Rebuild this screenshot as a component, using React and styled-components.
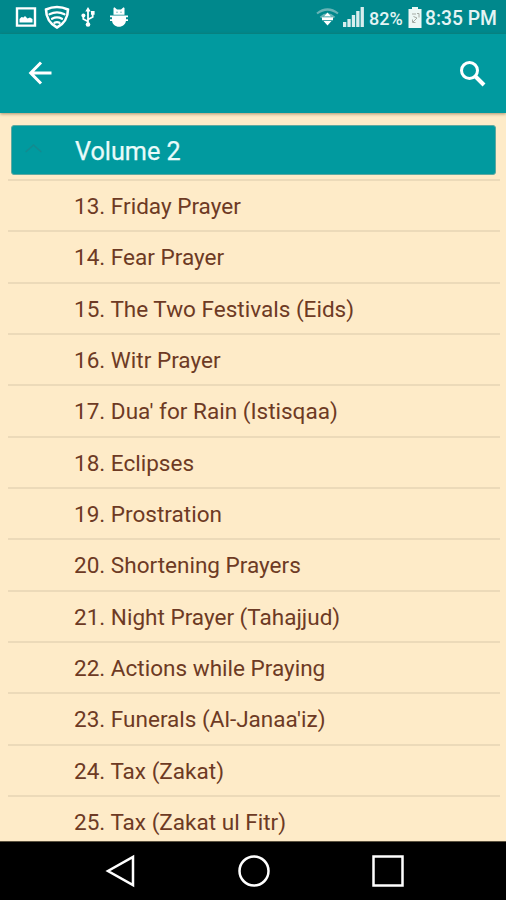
import React from "react";
import styled, { createGlobalStyle } from "styled-components";

const Global = createGlobalStyle`
  * { box-sizing: border-box; }
  body { margin: 0; background: #feebc8; font-family: Roboto, sans-serif; }
`;
const Screen = styled.main`
  width: 506px;
  height: 900px;
  overflow: hidden;
  display: flex;
  flex-direction: column;
  background: #feebc8;
`;
const StatusBar = styled.header`
  height: 34px;
  flex: none;
  display: flex;
  justify-content: space-between;
  align-items: center;
  background: #00888c;
  padding: 0 10px 0 15px;
`;
const StatusGroup = styled.div`
  display: flex;
  align-items: center;
  height: 34px;
`;
const Icon = styled.svg`
  display: block;
  flex: none;
  margin-left: ${(p) => p.$gap || 0}px;
`;
const StatusText = styled.span`
  color: #e4f4f4;
  font-size: ${(p) => p.$size}px;
  font-weight: 500;
  line-height: 34px;
  padding-top: 3px;
  width: ${(p) => p.$width}px;
  margin-left: ${(p) => p.$gap}px;
  white-space: nowrap;
`;
const Toolbar = styled.nav`
  height: 79px;
  flex: none;
  display: flex;
  justify-content: space-between;
  align-items: center;
  padding: 0 20px 1px 27px;
  background: #019a9f;
  box-shadow: 0 1px 3px rgba(90, 60, 20, 0.5);
`;
const List = styled.section`
  flex: 1;
  min-height: 0;
  overflow: hidden;
  padding: 12px 6px 0 8px;
`;
const VolumeHeader = styled.div`
  height: 50px;
  margin: 0 4px 4px 3px;
  display: flex;
  align-items: center;
  background: #019a9f;
  border: 1px solid #5fa9a0;
  border-radius: 3px;
  color: #e9fbfa;
  font-size: 25.2px;
`;
const VolumeTitle = styled.span`
  margin-left: 33px;
  padding-top: 2px;
  -webkit-text-stroke: 0.25px currentColor;
`;
const Rows = styled.ul`
  list-style: none;
  margin: 0;
  padding: 0;
`;
const Row = styled.li`
  height: 51.33px;
  border-top: 2px solid #ecdab9;
  padding-left: 66px;
  line-height: 51px;
  font-size: 22.54px;
  color: #6d3a24;
  white-space: nowrap;
`;
const NavBar = styled.footer`
  height: 59px;
  flex: none;
  display: flex;
  justify-content: center;
  align-items: center;
  gap: 100px;
  padding-left: 1px;
  background: #000;
  border-top: 1px solid #5b523f;
`;

const chapters = [
  "13. Friday Prayer",
  "14. Fear Prayer",
  "15. The Two Festivals (Eids)",
  "16. Witr Prayer",
  "17. Dua' for Rain (Istisqaa)",
  "18. Eclipses",
  "19. Prostration",
  "20. Shortening Prayers",
  "21. Night Prayer (Tahajjud)",
  "22. Actions while Praying",
  "23. Funerals (Al-Janaa'iz)",
  "24. Tax (Zakat)",
  "25. Tax (Zakat ul Fitr)",
];

const PictureIcon = () => (
  <Icon width="22" height="20" viewBox="0 0 22 20" fill="none">
    <path d="M2 1.4h18v17.2H2z" stroke="#fff" strokeWidth="2.4" />
    <path d="M4.500 15.500V12l2-2 2 .5 1.500-1.500 2.500 2.500 2.500-1 2.500 1.500v3.500z" fill="#fff" />
  </Icon>
);
const ShieldWifiIcon = () => (
  <Icon $gap={7} width="26" height="24" viewBox="0 0 26 24" fill="none" stroke="#fff" strokeLinecap="round">
    <path d="M2 4.500Q13-.5 24 4.500C24 12 20 19 13 22.500 6 19 2 12 2 4.500z" strokeWidth="2.600" />
    <path d="M5.500 9.300q7.500-3.800 15 0M8 13.700q5-2.600 10 0M10.500 17.800q2.500-1.300 5 0" strokeWidth="2.300" />
  </Icon>
);
const UsbIcon = () => (
  <Icon $gap={11} width="14" height="20" viewBox="0 0 14 20" fill="none" stroke="#fff" strokeWidth="1.8">
    <path d="M7 3v14M7 14.500L2.300 12V8M7 12.500l4.700-2.500V6" />
    <path d="M7 0l2.700 4.500H4.300zM10 4h3.600v3.800H10z" fill="#fff" stroke="none" />
    <circle cx="2.400" cy="8.500" r="2" fill="#fff" stroke="none" />
    <circle cx="7" cy="17.500" r="2.300" fill="#fff" stroke="none" />
  </Icon>
);
const BugIcon = () => (
  <Icon $gap={14} width="20" height="20" viewBox="0 0 20 20" fill="#fff">
    <path d="M4.500 7.800V1l1-.8L8 2.400h4L14.500.2l1 .8v6.800zM3 9h14v4c0 9-14 9-14 0z" />
    <path d="M1 9.300h18M1 13.200h18" stroke="#fff" strokeWidth="1.700" />
    <path d="M7.500 5.200h1M11.500 5.200h1" stroke="#00888c" />
  </Icon>
);
const WifiIcon = () => (
  <Icon width="23" height="18" viewBox="0 0 23 18" fill="none">
    <path d="M1 5.500q10.500-8 21 0M4.500 9.500q7-6 14 0" stroke="#68b4b6" strokeWidth="2.200" />
    <path d="M11.500 4.500l3.500 4h-7zM11.500 17.500l-4-4.500h8zM6 9.300h11v3H6z" fill="#fff" />
  </Icon>
);
const SignalIcon = () => (
  <Icon $gap={4} width="21" height="20" viewBox="0 0 21 20" fill="#d8eeee">
    <path d="M0 15h3.300v5H0zM4.400 12h3.300v8H4.400zM8.800 8h3.300v12H8.800zM13.200 4h3.300v16h-3.300zM17.600 0h3.300v20h-3.300z" />
  </Icon>
);
const BatteryIcon = () => (
  <Icon $gap={5} width="14" height="21" viewBox="0 0 14 21" fill="none">
    <path d="M4 0h6v2h3.500v19H.5V2H4z" fill="#edf7f5" />
    <path d="M4 7h4M9 6.500h2v4M5.500 9.500L9 11l-4 4M7.500 15.500h-3v-3" stroke="#a5aaa4" />
  </Icon>
);
const BackIcon = () => (
  <Icon $gap={1} width="26" height="24" viewBox="0 0 26 24" fill="none" stroke="#fff" strokeWidth="3">
    <path d="M13 1.500L2.700 12 13 22.500M3 12H23.500" />
  </Icon>
);
const SearchIcon = () => (
  <Icon width="27" height="27" viewBox="0 0 27 27" fill="none" stroke="#fff">
    <circle cx="10.500" cy="10.500" r="8" strokeWidth="3" />
    <path d="M16.500 16.500l8.500 8.500" strokeWidth="4" />
  </Icon>
);
const Chevron = () => (
  <Icon $gap={13} width="17" height="12" viewBox="0 0 17 12" fill="none" stroke="#138b90" strokeWidth="1.600">
    <path d="M.7 8l7.800-7 7.800 7" />
  </Icon>
);

export default function App() {
  return (
    <Screen>
      <Global />
      <StatusBar>
        <StatusGroup>
          <PictureIcon />
          <ShieldWifiIcon />
          <UsbIcon />
          <BugIcon />
        </StatusGroup>
        <StatusGroup>
          <WifiIcon />
          <SignalIcon />
          <StatusText $size={18} $width={34} $gap={5}>82%</StatusText>
          <BatteryIcon />
          <StatusText $size={19.3} $width={71} $gap={3}>8:35 PM</StatusText>
        </StatusGroup>
      </StatusBar>
      <Toolbar>
        <BackIcon />
        <SearchIcon />
      </Toolbar>
      <List>
        <VolumeHeader>
          <Chevron />
          <VolumeTitle>Volume 2</VolumeTitle>
        </VolumeHeader>
        <Rows>
          {chapters.map((chapter) => <Row key={chapter}>{chapter}</Row>)}
        </Rows>
      </List>
      <NavBar>
        <Icon width="34" height="34" viewBox="0 0 34 34" fill="none" stroke="#fff" strokeWidth="2.500">
          <path d="M30 3v28L5 17z" />
        </Icon>
        <Icon width="34" height="34" viewBox="0 0 34 34" fill="none" stroke="#fff" strokeWidth="2.500">
          <circle cx="17" cy="17" r="14.500" />
        </Icon>
        <Icon width="34" height="34" viewBox="0 0 34 34" fill="none" stroke="#fff" strokeWidth="2.500">
          <path d="M2.500 2.500h29v29h-29z" />
        </Icon>
      </NavBar>
    </Screen>
  );
}
